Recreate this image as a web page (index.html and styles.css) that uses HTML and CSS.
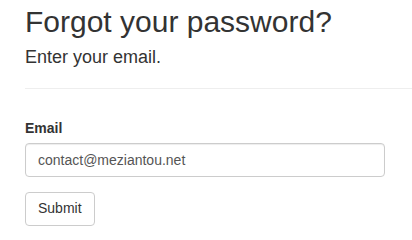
FILE: index.html
```html
<!DOCTYPE html>
<html lang="en">
<head>
<meta charset="utf-8">
<title>Forgot your password?</title>
<link rel="stylesheet" href="styles.css">
</head>
<body>
<main class="page">
  <h2 class="title">Forgot your password?</h2>
  <h4 class="subtitle">Enter your email.</h4>
  <hr class="divider">
  <form class="form">
    <div class="form-group">
      <label class="label" for="email">Email</label>
      <input class="input" id="email" type="email" value="contact@meziantou.net">
    </div>
    <button class="btn" type="button">Submit</button>
  </form>
</main>
</body>
</html>
```
FILE: styles.css
```css
html, body {
  margin: 0;
  padding: 0;
  background: #fff;
}
body {
  font-family: "Liberation Sans", Arial, Helvetica, sans-serif;
  font-size: 14px;
  line-height: 1.42857;
  color: #333;
  overflow: hidden;
}
.page {
  padding: 5px 0 0 25px;
}
.title {
  margin: 0 0 10px;
  font-size: 30px;
  font-weight: 500;
  line-height: 33px;
}
.subtitle {
  margin: 0;
  font-size: 18px;
  font-weight: 500;
  line-height: 19.8px;
}
.divider {
  margin: 20px 0;
  border: 0;
  border-top: 1px solid #eee;
  height: 0;
}
.form {
  padding-top: 9px;
}
.form-group {
  display: flex;
  flex-direction: column;
  align-items: flex-start;
  margin-bottom: 15px;
}
.label {
  font-weight: 700;
  line-height: 20px;
  margin-bottom: 5px;
}
.input {
  box-sizing: border-box;
  width: 360px;
  height: 34px;
  padding: 6px 12px;
  font-family: inherit;
  font-size: 14px;
  line-height: 1.42857;
  color: #555;
  background: #fff;
  border: 1px solid #ccc;
  border-radius: 4px;
  box-shadow: inset 0 1px 1px rgba(0,0,0,.075);
  margin: 0;
}
.btn {
  box-sizing: border-box;
  height: 34px;
  padding: 6px 12px;
  font-family: inherit;
  font-size: 14px;
  line-height: 1.42857;
  color: #333;
  background: #fff;
  border: 1px solid #ccc;
  border-radius: 4px;
  margin: 0;
  cursor: pointer;
}
```
